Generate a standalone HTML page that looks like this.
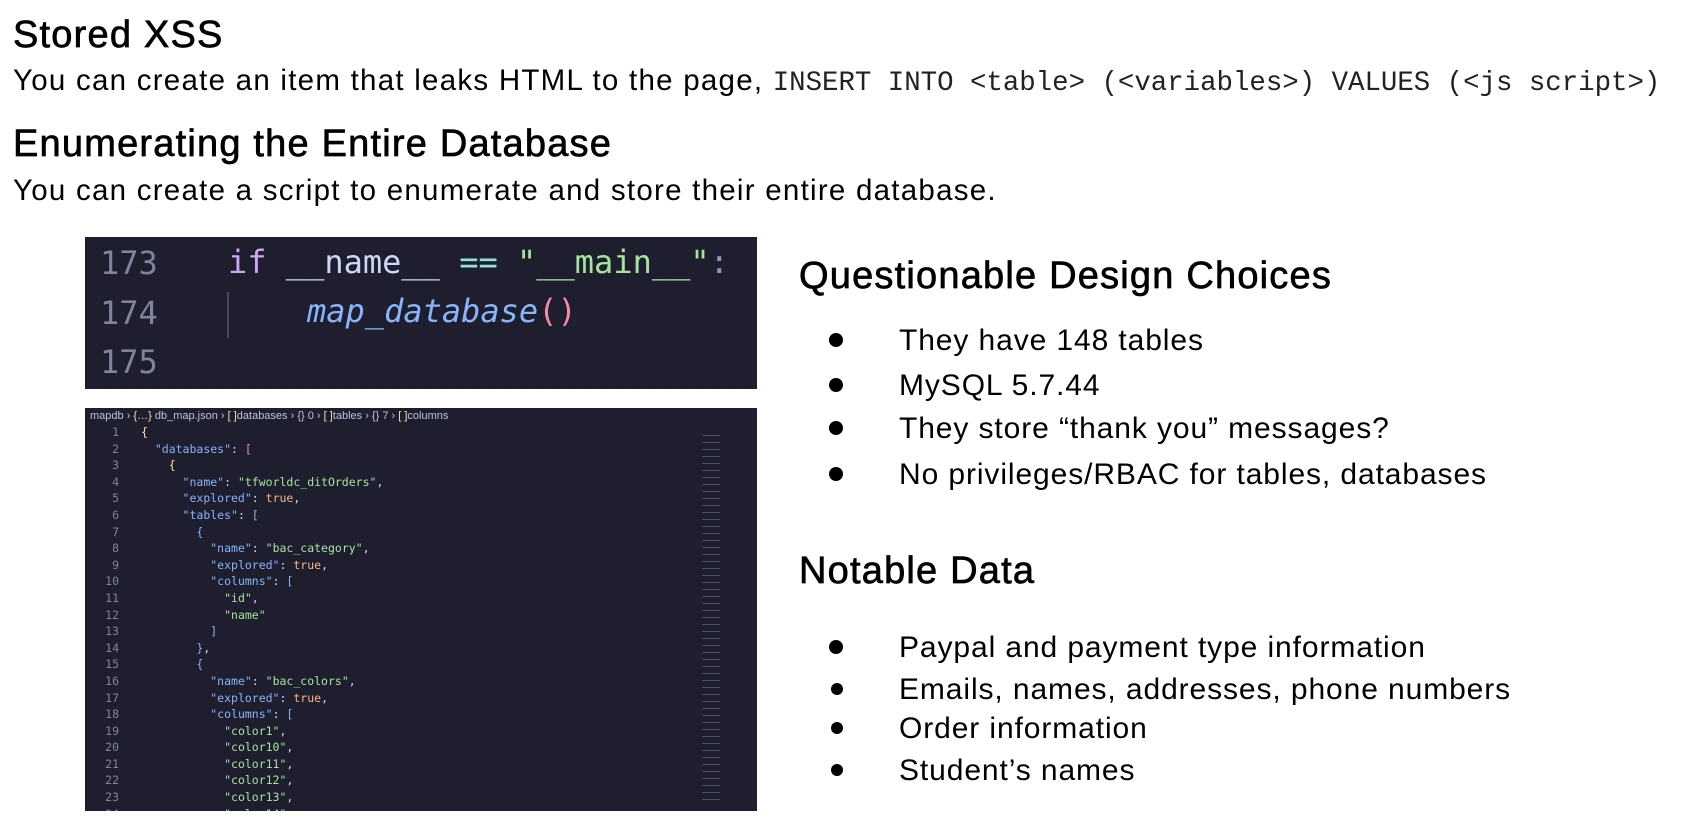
<!DOCTYPE html>
<html><head><meta charset="utf-8"><style>
body{margin:0;width:1700px;height:834px;background:#fff;position:relative;overflow:hidden;font-family:"Liberation Sans",sans-serif;color:#000}
.a{position:absolute;white-space:nowrap;line-height:1}
h1{position:absolute;margin:0;font-weight:normal;font-size:38px;line-height:1;white-space:nowrap;letter-spacing:1.2px;-webkit-text-stroke:0.7px #000}
.p{font-size:29.5px;letter-spacing:1.25px}
.mono{font-family:"Liberation Mono",monospace;font-size:27.4px;color:#222;letter-spacing:0}
.box1{position:absolute;left:85px;top:237px;width:672px;height:152px;background:#1e1e2e}
.box2{position:absolute;left:85px;top:408px;width:672px;height:403px;background:#1e1e2e;overflow:hidden}
.c1{position:absolute;font-family:"DejaVu Sans Mono",monospace;font-size:32px;line-height:1;white-space:pre}
.ln{color:#7f849c}
.bc{position:absolute;left:5px;top:2px;font-size:11px;color:#bac2de;font-family:"Liberation Sans",sans-serif;white-space:nowrap}
.j{position:absolute;left:0;font-family:"DejaVu Sans Mono",monospace;font-size:11.5px;white-space:pre;line-height:16.6px}
.n{display:inline-block;width:34px;text-align:right;color:#7f849c;margin-right:22px}
.k{color:#89b4fa}.s{color:#a6e3a1}.t{color:#fab387}.b{color:#f38ba8}.y{color:#f9e2af}.w{color:#cdd6f4}
.li{position:absolute;font-size:30px;letter-spacing:0.9px;white-space:nowrap;line-height:1}
.dot{position:absolute;width:14px;height:14px;border-radius:50%;background:#000}
</style></head><body>
<h1 style="left:13px;top:16px">Stored XSS</h1>
<div class="a p" style="left:13px;top:66px">You can create an item that leaks HTML to the page, <span class="mono">INSERT INTO &lt;table&gt; (&lt;variables&gt;) VALUES (&lt;js script&gt;)</span></div>
<h1 style="left:13px;top:125px">Enumerating the Entire Database</h1>
<div class="a p" style="left:13px;top:176px">You can create a script to enumerate and store their entire database.</div>

<div class="box1">
<div class="c1 ln" style="left:15px;top:10px">173</div>
<div class="c1 ln" style="left:15px;top:60px">174</div>
<div class="c1 ln" style="left:15px;top:109px">175</div>
<div class="c1" style="left:143px;top:9px"><span style="color:#cba6f7">if</span><span class="w"> __name__ </span><span style="color:#94e2d5">==</span> <span class="s">"__main__"</span><span style="color:#9399b2">:</span></div>
<div style="position:absolute;left:142px;top:55px;width:2px;height:46px;background:#45475a"></div>
<div class="c1" style="left:222px;top:58px;font-style:italic"><span class="k">map_database</span><span class="b" style="font-style:normal">()</span></div>
</div>

<div class="box2">
<div class="bc">mapdb › <span class="y">{…}</span> db_map.json › <span class="y">[ ]</span>databases › {} 0 › <span class="y">[ ]</span>tables › {} 7 › <span class="y">[ ]</span>columns</div>
<div class="j" style="top:16px"><span class="n">1</span><span class="y">{</span>
<span class="n">2</span>  <span class="k">"databases"</span><span class="w">: </span><span class="b">[</span>
<span class="n">3</span>    <span class="y">{</span>
<span class="n">4</span>      <span class="k">"name"</span><span class="w">: </span><span class="s">"tfworldc_ditOrders"</span><span class="w">,</span>
<span class="n">5</span>      <span class="k">"explored"</span><span class="w">: </span><span class="t">true</span><span class="w">,</span>
<span class="n">6</span>      <span class="k">"tables"</span><span class="w">: </span><span class="k">[</span>
<span class="n">7</span>        <span class="k">{</span>
<span class="n">8</span>          <span class="k">"name"</span><span class="w">: </span><span class="s">"bac_category"</span><span class="w">,</span>
<span class="n">9</span>          <span class="k">"explored"</span><span class="w">: </span><span class="t">true</span><span class="w">,</span>
<span class="n">10</span>          <span class="k">"columns"</span><span class="w">: </span><span class="k">[</span>
<span class="n">11</span>            <span class="s">"id"</span><span class="w">,</span>
<span class="n">12</span>            <span class="s">"name"</span>
<span class="n">13</span>          <span class="k">]</span>
<span class="n">14</span>        <span class="k">}</span><span class="w">,</span>
<span class="n">15</span>        <span class="k">{</span>
<span class="n">16</span>          <span class="k">"name"</span><span class="w">: </span><span class="s">"bac_colors"</span><span class="w">,</span>
<span class="n">17</span>          <span class="k">"explored"</span><span class="w">: </span><span class="t">true</span><span class="w">,</span>
<span class="n">18</span>          <span class="k">"columns"</span><span class="w">: </span><span class="k">[</span>
<span class="n">19</span>            <span class="s">"color1"</span><span class="w">,</span>
<span class="n">20</span>            <span class="s">"color10"</span><span class="w">,</span>
<span class="n">21</span>            <span class="s">"color11"</span><span class="w">,</span>
<span class="n">22</span>            <span class="s">"color12"</span><span class="w">,</span>
<span class="n">23</span>            <span class="s">"color13"</span><span class="w">,</span>
<span class="n">24</span>            <span class="s">"color14"</span><span class="w">,</span></div>
<div style="position:absolute;left:617px;top:24px;width:18px;height:370px;background:repeating-linear-gradient(#1e1e2e 0 3px,#6c7086 3px 4px,#1e1e2e 4px 7px);opacity:.6"></div>
</div>

<h1 style="left:799px;top:257px">Questionable Design Choices</h1>
<div class="dot" style="left:829px;top:333px"></div><div class="li" style="left:899px;top:326px">They have 148 tables</div>
<div class="dot" style="left:829px;top:378px"></div><div class="li" style="left:899px;top:371px">MySQL 5.7.44</div>
<div class="dot" style="left:829px;top:421px"></div><div class="li" style="left:899px;top:414px">They store “thank you” messages?</div>
<div class="dot" style="left:829px;top:467px"></div><div class="li" style="left:899px;top:460px">No privileges/RBAC for tables, databases</div>

<h1 style="left:799px;top:552px">Notable Data</h1>
<div class="dot" style="left:829px;top:640px"></div><div class="li" style="left:899px;top:633px">Paypal and payment type information</div>
<div class="dot" style="left:831px;top:683px;width:12px;height:12px"></div><div class="li" style="left:899px;top:675px">Emails, names, addresses, phone numbers</div>
<div class="dot" style="left:831px;top:722px;width:12px;height:12px"></div><div class="li" style="left:899px;top:714px">Order information</div>
<div class="dot" style="left:831px;top:764px;width:12px;height:12px"></div><div class="li" style="left:899px;top:756px">Student’s names</div>
</body></html>
